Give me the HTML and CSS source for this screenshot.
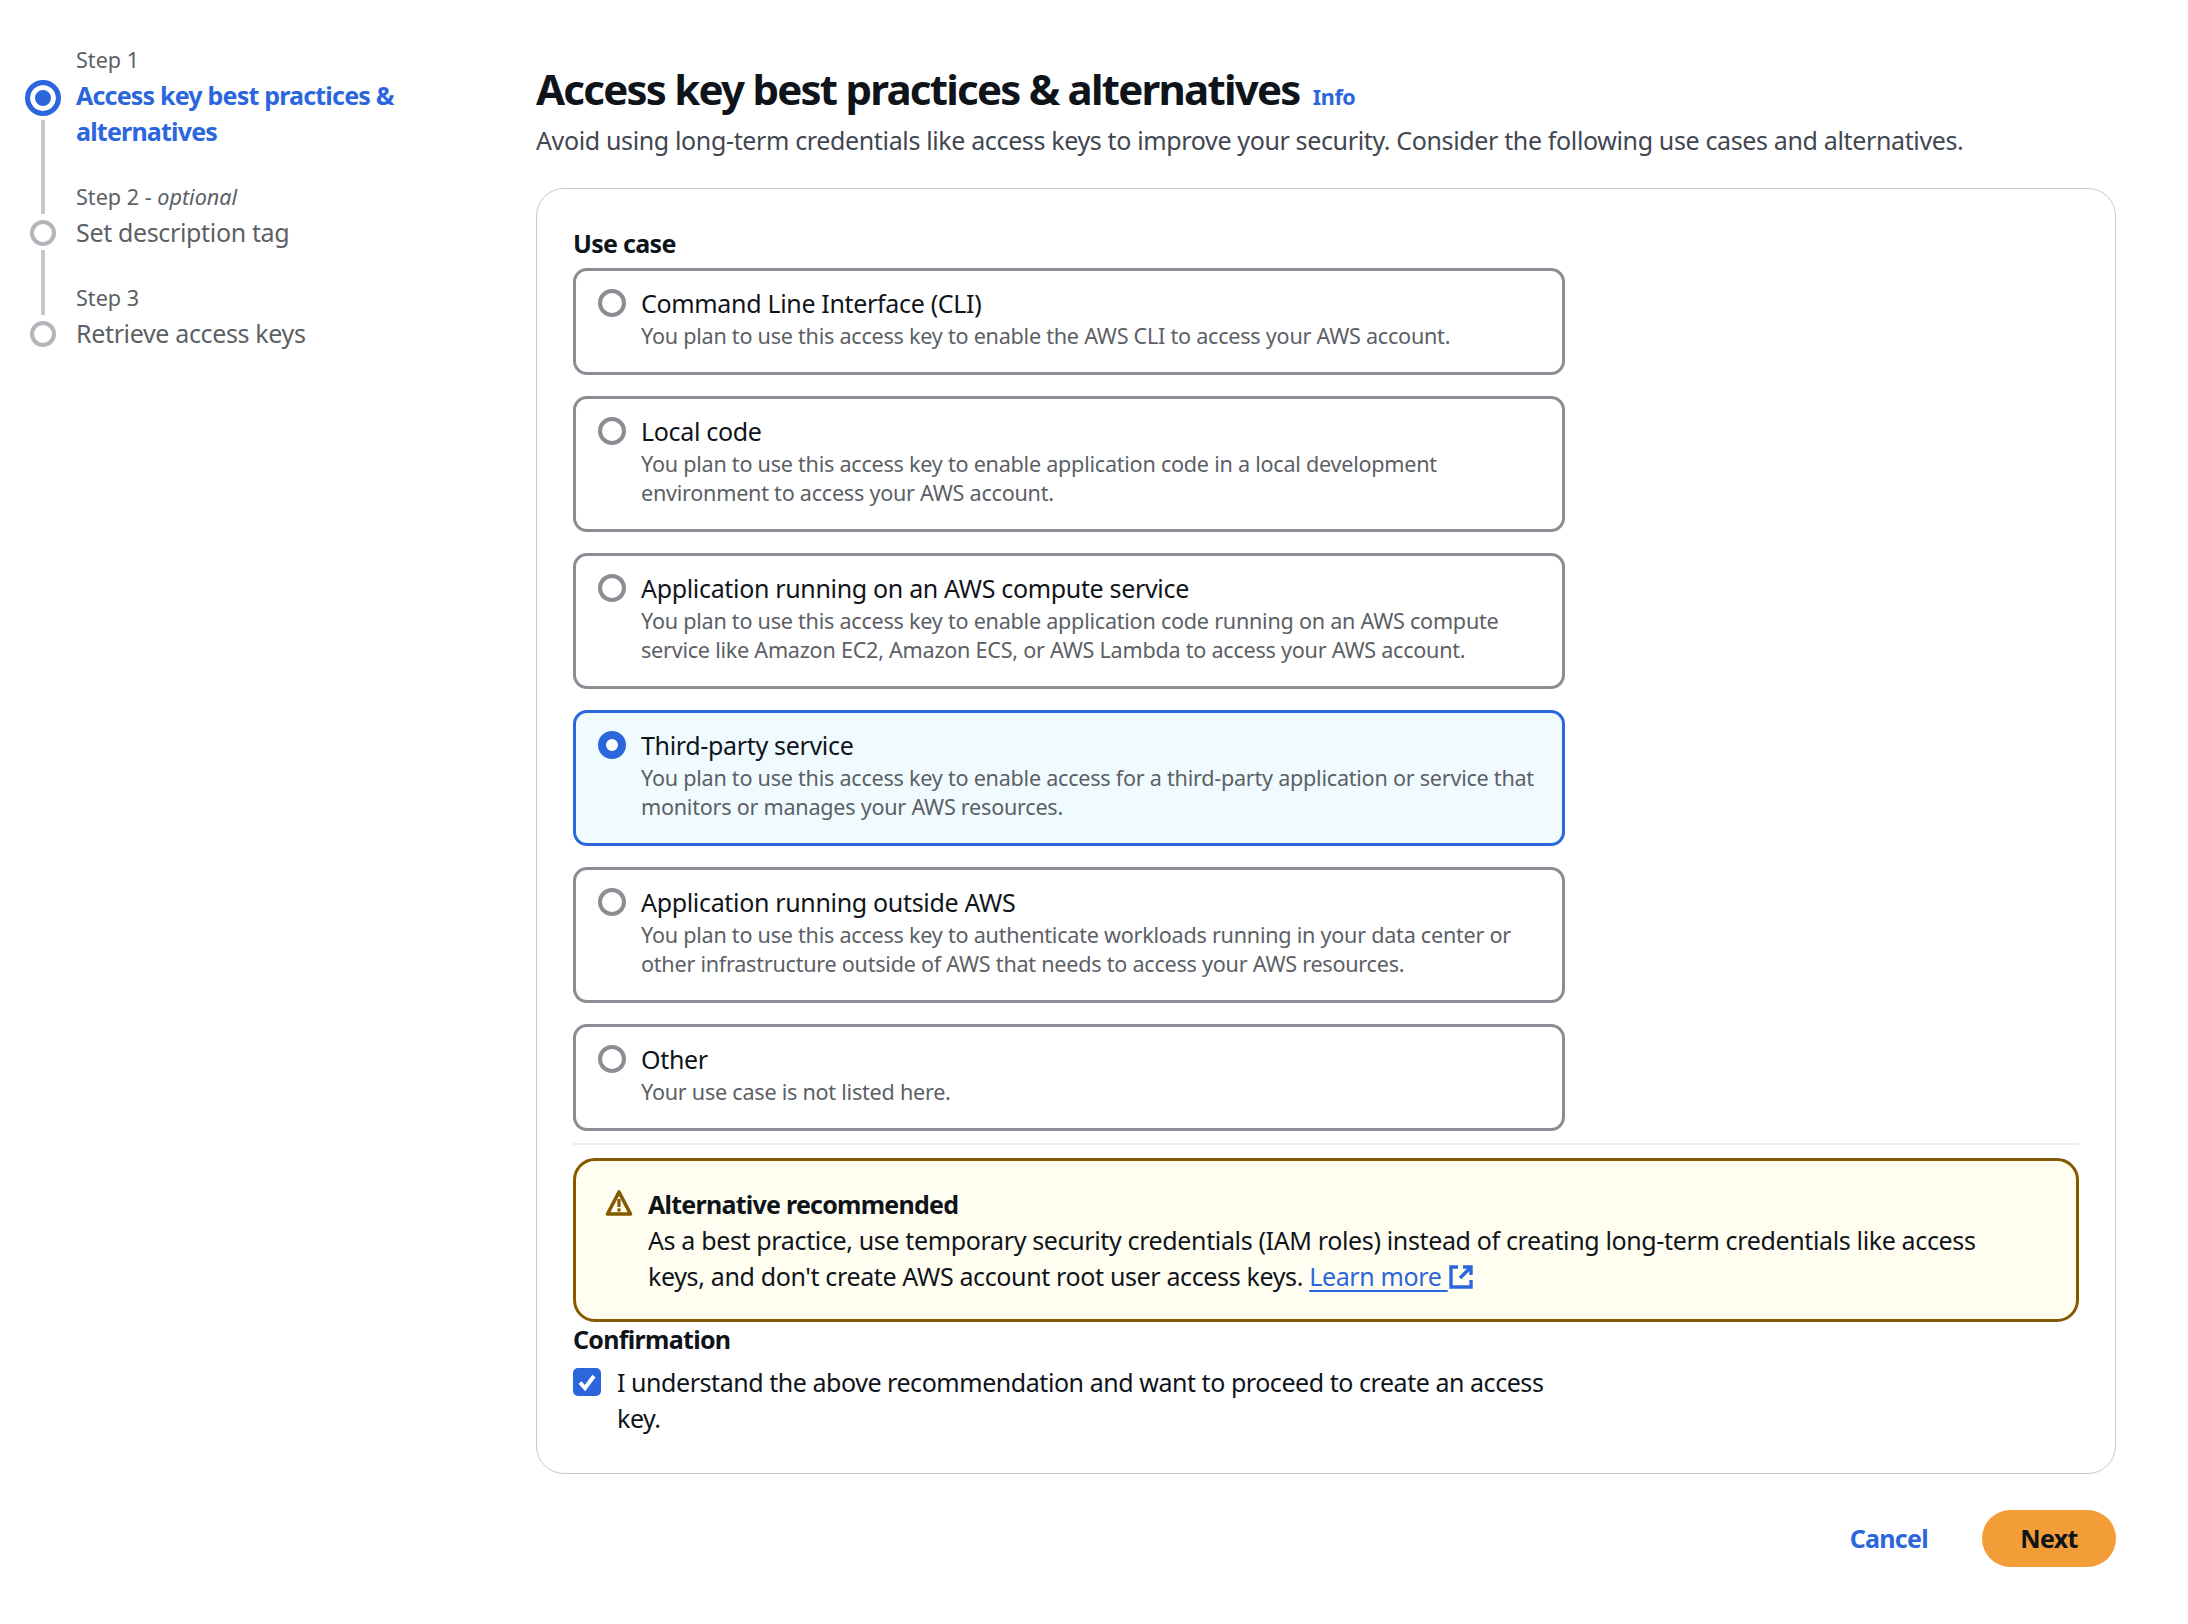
FILE: index.html
```html
<!DOCTYPE html>
<html lang="en">
<head>
    <meta charset="UTF-8">
    <meta name="viewport" content="width=device-width, initial-scale=1.0">
    <title>Access key best practices &amp; alternatives</title>
    <link rel="stylesheet" href="styles.css">
</head>
<body>
    <nav class="steps">
        <div class="step">
            <span></span>
            <div class="step-label">Step 1</div>
            <div class="step-rail">
                <span class="dot dot-active"></span>
                <span class="rail-line"></span>
            </div>
            <div class="step-title step-title-active">Access key best practices &amp; alternatives</div>
            <div class="rail-line step-tail"></div>
        </div>
        <div class="step">
            <div class="rail-line"></div>
            <div class="step-label">Step 2 - <em>optional</em></div>
            <div class="step-rail">
                <span class="dot"></span>
                <span class="rail-line"></span>
            </div>
            <div class="step-title">Set description tag</div>
            <div class="rail-line step-tail"></div>
        </div>
        <div class="step">
            <div class="rail-line"></div>
            <div class="step-label">Step 3</div>
            <div class="step-rail">
                <span class="dot"></span>
            </div>
            <div class="step-title">Retrieve access keys</div>
        </div>
    </nav>

    <main class="main">
        <h1 class="page-title">Access key best practices &amp; alternatives <a class="info-link" href="#">Info</a></h1>
        <p class="page-sub">Avoid using long-term credentials like access keys to improve your security. Consider the following use cases and alternatives.</p>

        <section class="panel">
            <div class="field-label">Use case</div>
            <div class="cards">
                <label class="card">
                    <span class="radio"></span>
                    <span class="card-text">
                        <span class="card-title">Command Line Interface (CLI)</span>
                        <span class="card-desc">You plan to use this access key to enable the AWS CLI to access your AWS account.</span>
                    </span>
                </label>
                <label class="card">
                    <span class="radio"></span>
                    <span class="card-text">
                        <span class="card-title">Local code</span>
                        <span class="card-desc">You plan to use this access key to enable application code in a local development environment to access your AWS account.</span>
                    </span>
                </label>
                <label class="card">
                    <span class="radio"></span>
                    <span class="card-text">
                        <span class="card-title">Application running on an AWS compute service</span>
                        <span class="card-desc">You plan to use this access key to enable application code running on an AWS compute service like Amazon EC2, Amazon ECS, or AWS Lambda to access your AWS account.</span>
                    </span>
                </label>
                <label class="card card-selected">
                    <span class="radio radio-on"></span>
                    <span class="card-text">
                        <span class="card-title">Third-party service</span>
                        <span class="card-desc">You plan to use this access key to enable access for a third-party application or service that monitors or manages your AWS resources.</span>
                    </span>
                </label>
                <label class="card">
                    <span class="radio"></span>
                    <span class="card-text">
                        <span class="card-title">Application running outside AWS</span>
                        <span class="card-desc">You plan to use this access key to authenticate workloads running in your data center or other infrastructure outside of AWS that needs to access your AWS resources.</span>
                    </span>
                </label>
                <label class="card">
                    <span class="radio"></span>
                    <span class="card-text">
                        <span class="card-title">Other</span>
                        <span class="card-desc">Your use case is not listed here.</span>
                    </span>
                </label>
            </div>

            <hr class="divider">

            <div class="alert">
                <svg class="alert-icon" viewBox="0 0 30 28" width="30" height="28">
                    <path d="M15 3 L26.5 25 H3.5 Z" fill="none" stroke="#855900" stroke-width="3.6" stroke-linejoin="round"/>
                    <rect x="13.4" y="10" width="3.2" height="8" fill="#855900"/>
                    <rect x="13.4" y="19.4" width="3.2" height="3.2" fill="#855900"/>
                </svg>
                <div class="alert-body">
                    <div class="alert-title">Alternative recommended</div>
                    <div class="alert-text">As a best practice, use temporary security credentials (IAM roles) instead of creating long-term credentials like access keys, and don't create AWS account root user access keys. <a class="learn-link" href="#">Learn more <svg class="ext-icon" viewBox="0 0 26 26" width="26" height="26">
                        <path d="M10 3 H3 V23 H23 V16" fill="none" stroke="#2b66dc" stroke-width="3.4"/>
                        <path d="M15 3 H23 V11 M23 3 L12 14" fill="none" stroke="#2b66dc" stroke-width="3.4"/>
                    </svg></a></div>
                </div>
            </div>

            <div class="field-label confirm-label">Confirmation</div>
            <label class="confirm">
                <span class="checkbox">
                    <svg viewBox="0 0 28 28" width="28" height="28">
                        <path d="M7 14.5 L12 20 L21 8" fill="none" stroke="#fff" stroke-width="4"/>
                    </svg>
                </span>
                <span class="confirm-text">I understand the above recommendation and want to proceed to create an access key.</span>
            </label>
        </section>

        <div class="actions">
            <a class="btn-link" href="#">Cancel</a>
            <button class="btn-primary">Next</button>
        </div>
    </main>
</body>
</html>
```

FILE: styles.css
```css
* {
    box-sizing: border-box;
}

body {
    margin: 0;
    font-family: "Noto Sans", sans-serif;
    font-size: 25px;
    line-height: 36px;
    letter-spacing: -0.36px;
    color: #0f141a;
    background: #ffffff;
    display: flex;
    align-items: flex-start;
}

/* left step list */
.steps {
    width: 536px;
    flex: none;
    padding: 46px 0 0 18px;
}

.step {
    display: grid;
    grid-template-columns: 58px 400px;
    color: #5c5f66;
}

.step-label {
    font-size: 21.6px;
    line-height: 28px;
    margin-bottom: 3px;
    letter-spacing: 0;
}

.step-title {
    color: #5c5f66;
    letter-spacing: -0.35px;
}

.step-title-active {
    color: #2b66dc;
    font-weight: 700;
    letter-spacing: -0.8px;
}

.step-rail {
    display: flex;
    flex-direction: column;
    align-items: center;
    width: 50px;
    padding-top: 5px;
}

.rail-line {
    display: block;
    width: 4px;
    margin-left: 23px;
    background: #c6c6cd;
    flex: 1;
}

.step-rail .rail-line {
    margin-left: 0;
}

.step-tail {
    height: 34px;
}

.dot {
    width: 26px;
    height: 26px;
    margin: 1px 0 4px;
    border: 4px solid #b4b4bb;
    border-radius: 50%;
    flex: none;
}

.dot-active {
    width: 36px;
    height: 36px;
    margin: -2px 0 4px;
    border: 5px solid #2b66dc;
    background: #2b66dc;
    box-shadow: inset 0 0 0 5px #ffffff;
}

/* main column */
.main {
    width: 1580px;
    flex: none;
    padding-top: 61px;
}

.page-title {
    margin: 0;
    font-size: 42px;
    line-height: 56px;
    font-weight: 700;
    letter-spacing: -1.76px;
}

.info-link {
    margin-left: 4px;
    font-size: 21.6px;
    font-weight: 700;
    letter-spacing: -0.4px;
    color: #2b66dc;
    text-decoration: none;
}

.page-sub {
    margin: -3px 0 0;
    color: #414751;
}

.panel {
    margin-top: 30px;
    padding: 36px 36px 37px;
    border: 1px solid #c6c6cd;
    border-radius: 28px;
}

.field-label {
    font-weight: 700;
    letter-spacing: -0.7px;
}

.cards {
    width: 992px;
    display: flex;
    flex-direction: column;
    gap: 21px;
    margin-top: 7px;
}

.card {
    display: flex;
    gap: 15px;
    padding: 14px 22px 22px;
    border: 3px solid #8c8c94;
    border-radius: 14px;
}

.card-selected {
    border-color: #2b66dc;
    background: #f0fbff;
}

.radio {
    width: 28px;
    height: 28px;
    margin-top: 4px;
    flex: none;
    border: 4px solid #8c8c94;
    border-radius: 50%;
    background: #ffffff;
}

.radio-on {
    border: 8px solid #2b66dc;
}

.card-text {
    display: flex;
    flex-direction: column;
}

.card-title {
    letter-spacing: -0.33px;
}

.card-desc {
    font-size: 21.6px;
    line-height: 29px;
    color: #5c5f66;
    letter-spacing: -0.25px;
}

.divider {
    margin: 12px 0 13px;
    border: none;
    border-top: 2px solid #ebebf0;
}

.alert {
    display: flex;
    gap: 14px;
    padding: 25px 28px;
    border: 3px solid #855900;
    border-radius: 22px;
    background: #fffef0;
}

.alert-icon {
    flex: none;
    margin-top: 3px;
}

.alert-body {
    max-width: 1345px;
}

.alert-title {
    font-weight: 700;
    letter-spacing: -0.75px;
}

.learn-link {
    color: #2b66dc;
    text-decoration: underline;
    text-underline-offset: 4px;
}

.ext-icon {
    vertical-align: -4px;
}

.confirm-label {
    margin-top: -1px;
}

.confirm {
    display: flex;
    gap: 16px;
    width: 992px;
    margin-top: 7px;
    letter-spacing: -0.45px;
}

.checkbox {
    width: 28px;
    height: 28px;
    margin-top: 4px;
    flex: none;
    border-radius: 5px;
    background: #2b66dc;
}

.checkbox svg {
    display: block;
}

.actions {
    display: flex;
    justify-content: flex-end;
    align-items: center;
    gap: 54px;
    margin-top: 36px;
}

.btn-link {
    font-weight: 700;
    letter-spacing: -0.7px;
    color: #2b66dc;
    text-decoration: none;
    padding-bottom: 2px;
}

.btn-primary {
    width: 134px;
    height: 57px;
    padding: 0 0 2px;
    border: none;
    border-radius: 29px;
    background: #f29d38;
    color: #0f141a;
    font: inherit;
    font-weight: 700;
    letter-spacing: -0.7px;
}
```
